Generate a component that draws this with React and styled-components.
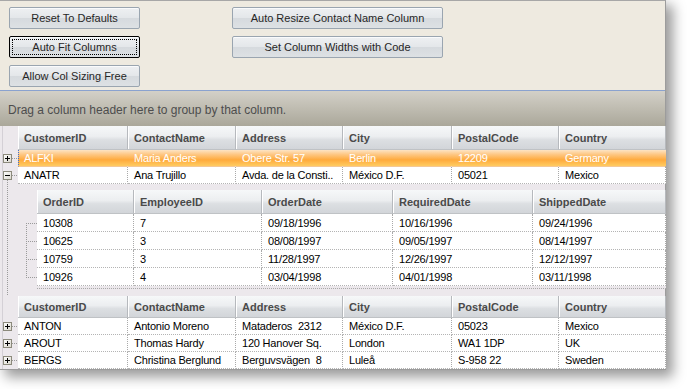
import styled, { createGlobalStyle } from 'styled-components'

const GlobalStyle = createGlobalStyle`
	body {
		margin: 0;
		background: #ffffff;
		font-family: "Liberation Sans", Arial, sans-serif;
	}
`

const MAIN_COLS = '18px 110px 108px 107px 109px 107px 107px'
const CHILD_COLS = '97px 128px 131px 140px 133px'

const mainHeaders = ['CustomerID', 'ContactName', 'Address', 'City', 'PostalCode', 'Country']
const childHeaders = ['OrderID', 'EmployeeID', 'OrderDate', 'RequiredDate', 'ShippedDate']

const orders = [
	['10308', '7', '09/18/1996', '10/16/1996', '09/24/1996'],
	['10625', '3', '08/08/1997', '09/05/1997', '08/14/1997'],
	['10759', '3', '11/28/1997', '12/26/1997', '12/12/1997'],
	['10926', '4', '03/04/1998', '04/01/1998', '03/11/1998'],
]

const moreCustomers = [
	['ANTON', 'Antonio Moreno', 'Mataderos  2312', 'México D.F.', '05023', 'Mexico'],
	['AROUT', 'Thomas Hardy', '120 Hanover Sq.', 'London', 'WA1 1DP', 'UK'],
	['BERGS', 'Christina Berglund', 'Berguvsvägen  8', 'Luleå', 'S-958 22', 'Sweden'],
]

const Expander = ({ expanded }) => (
	<svg width="18" height="17" viewBox="0 0 18 17">
		<defs>
			<linearGradient id="exp" x1="0" y1="0" x2="1" y2="1">
				<stop offset="0" stopColor="#ffffff" />
				<stop offset="1" stopColor="#d9d6cc" />
			</linearGradient>
		</defs>
		<line x1="12" y1="8.5" x2="18" y2="8.5" stroke="#9a9a9a" strokeDasharray="1 1" />
		{expanded && <line x1="7.5" y1="13" x2="7.5" y2="17" stroke="#9a9a9a" strokeDasharray="1 1" />}
		<rect x="3.5" y="4.5" width="8" height="8" fill="url(#exp)" stroke="#8c8a7c" />
		<line x1="5" y1="8.5" x2="10" y2="8.5" stroke="#000" />
		{!expanded && <line x1="7.5" y1="6" x2="7.5" y2="11" stroke="#000" />}
	</svg>
)

const App = () => {
	return (
		<Page>
			<GlobalStyle />
			<Window>
				<ButtonPanel>
					<Button>Reset To Defaults</Button>
					<Button>Auto Resize Contact Name Column</Button>
					<Button $focused>Auto Fit Columns</Button>
					<Button>Set Column Widths with Code</Button>
					<Button>Allow Col Sizing Free</Button>
				</ButtonPanel>
				<GroupBand>Drag a column header here to group by that column.</GroupBand>
				<Grid>
					<Row $cols={MAIN_COLS}>
						<Indicator />
						{mainHeaders.map((h) => (
							<HeaderCell key={h} $h={24}>{h}</HeaderCell>
						))}
					</Row>
					<Row $cols={MAIN_COLS}>
						<Indicator>
							<Expander />
						</Indicator>
						<SelectedCell $first>ALFKI</SelectedCell>
						<SelectedCell>Maria Anders</SelectedCell>
						<SelectedCell>Obere Str. 57</SelectedCell>
						<SelectedCell>Berlin</SelectedCell>
						<SelectedCell>12209</SelectedCell>
						<SelectedCell>Germany</SelectedCell>
					</Row>
					<Row $cols={MAIN_COLS}>
						<Indicator>
							<Expander expanded />
						</Indicator>
						<Cell>ANATR</Cell>
						<Cell>Ana Trujillo</Cell>
						<Cell>Avda. de la Consti..</Cell>
						<Cell>México D.F.</Cell>
						<Cell>05021</Cell>
						<Cell>Mexico</Cell>
					</Row>
					<ChildBand>
						<Gutter>
							<svg width="37" height="112" viewBox="0 0 37 112">
								<g stroke="#9a9a9a" strokeDasharray="1 1">
									<line x1="7.5" y1="0" x2="7.5" y2="112" />
									<line x1="26.5" y1="39" x2="26.5" y2="93" />
									{[39, 57, 75, 93].map((y) => (
										<line key={y} x1="26" y1={y + 0.5} x2="37" y2={y + 0.5} />
									))}
								</g>
							</svg>
						</Gutter>
						<ChildTable>
							<Row $cols={CHILD_COLS}>
								{childHeaders.map((h) => (
									<HeaderCell key={h} $h={24}>{h}</HeaderCell>
								))}
							</Row>
							{orders.map((o) => (
								<Row key={o[0]} $cols={CHILD_COLS}>
									{o.map((v, i) => (
										<Cell key={i} $h={18}>{v}</Cell>
									))}
								</Row>
							))}
						</ChildTable>
					</ChildBand>
					<Row $cols={MAIN_COLS}>
						<Indicator />
						{mainHeaders.map((h) => (
							<HeaderCell key={h} $h={22}>{h}</HeaderCell>
						))}
					</Row>
					{moreCustomers.map((c) => (
						<Row key={c[0]} $cols={MAIN_COLS}>
							<Indicator>
								<Expander />
							</Indicator>
							{c.map((v, i) => (
								<Cell key={i}>{v}</Cell>
							))}
						</Row>
					))}
				</Grid>
			</Window>
		</Page>
	)
}
export default App

const Page = styled.div`
	width: 687px;
	height: 389px;
	overflow: hidden;
`

const Window = styled.div`
	width: 665px;
	border-top: 1px solid #a7a7a7;
	border-right: 1px solid #9c9c9c;
	border-bottom: 1px solid #9c9c9c;
	background: #ece8ec;
	box-shadow: 6px 6px 12px 1px rgba(0, 0, 0, 0.4);
`

const ButtonPanel = styled.div`
	height: 83px;
	padding: 6px 9px 0;
	background: #eeeae0;
	border-bottom: 1px solid #8aa2cf;
	display: grid;
	grid-template-columns: 131px 211px;
	grid-auto-rows: 22px;
	column-gap: 92px;
	row-gap: 7px;
	align-content: start;
`

const Button = styled.button`
	height: 22px;
	padding: 0;
	font-family: "Liberation Sans", Arial, sans-serif;
	font-size: 11px;
	color: #262626;
	border: 1px solid ${(p) => (p.$focused ? '#000000' : '#9aa5b0')};
	border-radius: 2px;
	background: linear-gradient(to bottom, #eef0f2 0%, #e4e7ea 48%, #d6dade 52%, #dde1e4 100%);
	outline: ${(p) => (p.$focused ? '1px dotted #000' : 'none')};
	outline-offset: -4px;
	box-shadow: inset 0 1px 0 #fafbfc;
`

const GroupBand = styled.div`
	height: 35px;
	padding: 2px 8px 0;
	box-sizing: border-box;
	display: flex;
	align-items: center;
	font-size: 12px;
	color: #4d4d4d;
	background: linear-gradient(to bottom, #d3d0c8 0%, #c1beb3 45%, #aaa79a 100%);
`

const Grid = styled.div`
	display: flex;
	flex-direction: column;
	background: #ece8ec;
`

const Row = styled.div`
	display: grid;
	grid-template-columns: ${(p) => p.$cols};
`

const Indicator = styled.div`
	height: 100%;
	display: flex;
	align-items: center;
	box-shadow: inset 2px 0 0 #ece8ec, inset 3px 0 0 #d4d0d6;

	svg {
		display: block;
	}
`

const HeaderCell = styled.div`
	height: ${(p) => p.$h}px;
	box-sizing: border-box;
	padding-left: 6px;
	display: flex;
	align-items: center;
	font-size: 11px;
	font-weight: bold;
	color: #4a4a4a;
	white-space: nowrap;
	overflow: hidden;
	background: linear-gradient(to bottom, #f6f8f9 0%, #eceef0 45%, #dcdfe2 60%, #d2d5d9 100%);
	border-right: 1px solid #b6b9bd;
	border-bottom: 1px solid #bfc2c5;
	box-shadow: inset 1px 0 0 #ffffff;
`

const Cell = styled.div`
	height: ${(p) => p.$h || 17}px;
	box-sizing: border-box;
	padding-left: 6px;
	display: flex;
	align-items: center;
	font-size: 11px;
	letter-spacing: -0.2px;
	color: #000000;
	white-space: pre;
	overflow: hidden;
	background: #ffffff;
	border-right: 1px dotted #a9a9a9;
	border-bottom: 1px dotted #b4b4b4;
`

const SelectedCell = styled(Cell)`
	color: #ffffff;
	background: linear-gradient(to bottom, #fde4c4 0%, #fec783 28%, #ffaa3c 62%, #ffcc62 100%);
	border-right: 1px solid transparent;
	border-bottom: 1px solid #f5c894;
	border-left: ${(p) => (p.$first ? '1px dotted #3a6fd8' : 'none')};
	padding-left: ${(p) => (p.$first ? '5px' : '6px')};
`

const ChildBand = styled.div`
	display: grid;
	grid-template-columns: 37px 1fr;
	height: 112px;
	box-sizing: border-box;
	padding-top: 6px;
`

const Gutter = styled.div`
	margin-top: -6px;
	box-shadow: inset 2px 0 0 #ece8ec, inset 3px 0 0 #d4d0d6;

	svg {
		display: block;
	}
`

const ChildTable = styled.div`
	align-self: start;
	padding-bottom: 2px;
	border-bottom: 1px dotted #a9a9a9;
	background: #ece8ec;
`
